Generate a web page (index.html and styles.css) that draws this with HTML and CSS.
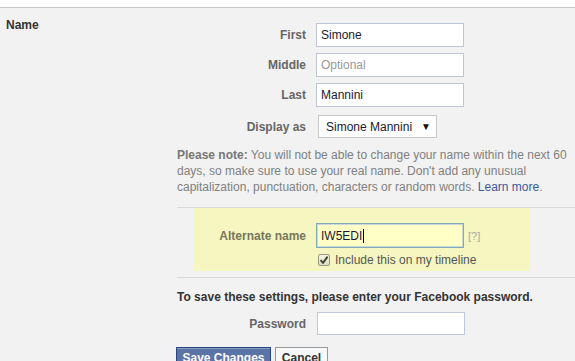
FILE: index.html
```html
<!DOCTYPE html>
<html>
<head>
<meta charset="utf-8">
<link rel="stylesheet" href="styles.css">
</head>
<body>
<div class="topbar"></div>
<div class="section">
  <div class="section-title">Name</div>
  <div class="section-body">
    <div class="rows">
      <div class="row">
        <label class="lbl">First</label>
        <input class="txt" type="text" value="Simone">
      </div>
      <div class="row">
        <label class="lbl">Middle</label>
        <input class="txt" type="text" placeholder="Optional">
      </div>
      <div class="row">
        <label class="lbl">Last</label>
        <input class="txt" type="text" value="Mannini">
      </div>
      <div class="row row-select">
        <label class="lbl">Display as</label>
        <div class="select"><span>Simone Mannini</span><span class="arrow">▼</span></div>
      </div>
    </div>
    <p class="note"><b>Please note:</b> You will not be able to change your name within the next 60 days, so make sure to use your real name. Don't add any unusual capitalization, punctuation, characters or random words. <a href="#">Learn more</a>.</p>
    <div class="sep"></div>
    <div class="alt-box">
      <div class="alt-row">
        <label class="lbl alt-lbl">Alternate name</label>
        <div class="txt alt-input"><span>IW5EDI</span><span class="caret"></span></div>
        <span class="help">[?]</span>
      </div>
      <div class="check-row">
        <span class="checkbox"><svg width="10" height="10" viewBox="0 0 10 10"><path d="M1.5 5.2 L4 7.8 L8.6 1.6" fill="none" stroke="#3d3d2a" stroke-width="1.8"/></svg></span>
        <span class="check-text">Include this on my timeline</span>
      </div>
    </div>
    <div class="sep sep2"></div>
    <div class="save-note">To save these settings, please enter your Facebook password.</div>
    <div class="row pw-row">
      <label class="lbl">Password</label>
      <input class="txt" type="password">
    </div>
    <div class="buttons">
      <button class="btn btn-primary">Save Changes</button>
      <button class="btn btn-cancel">Cancel</button>
    </div>
  </div>
</div>
</body>
</html>
```
FILE: styles.css
```css
html, body {
  margin: 0;
  padding: 0;
  height: 361px;
  overflow: hidden;
}
body {
  background: #f2f2f2;
  font-family: "Liberation Sans", Arial, sans-serif;
  font-size: 12px;
  color: #333;
}
.topbar {
  height: 7px;
  background: #fff;
  border-bottom: 1px solid #c6c6c6;
}
.section {
  display: grid;
  grid-template-columns: 171px 1fr;
  padding-left: 6px;
}
.section-title {
  padding-top: 10px;
  font-weight: bold;
  line-height: 14px;
  color: #333;
}
.section-body {
  padding-top: 15px;
}
.rows {
  display: flex;
  flex-direction: column;
  gap: 6px;
}
.row {
  display: grid;
  grid-template-columns: 129px 148px auto;
  column-gap: 10px;
  align-items: center;
}
.row-select {
  margin-top: 2px;
}
.lbl {
  text-align: right;
  font-weight: bold;
  color: #666;
  line-height: 14px;
}
.txt {
  box-sizing: border-box;
  width: 148px;
  height: 24px;
  margin: 0;
  border: 1px solid #bdc7d8;
  background: #fff;
  padding: 0 4px;
  font-family: "Liberation Sans", Arial, sans-serif;
  font-size: 12px;
  color: #1a1a2e;
  outline: none;
}
.txt::placeholder {
  color: #999;
}
.select {
  box-sizing: border-box;
  width: 119px;
  height: 23px;
  margin-left: 2px;
  border: 1px solid #c8c8c8;
  background: #fff;
  display: flex;
  align-items: center;
  justify-content: space-between;
  padding: 0 5px 0 7px;
  color: #1a1a2e;
}
.arrow {
  font-size: 10px;
  color: #111;
}
.note {
  margin: 9px 0 0 0;
  width: 398px;
  line-height: 16px;
  color: #808080;
}
.note b {
  color: #777;
}
.note a {
  color: #3b5998;
  text-decoration: none;
}
.sep {
  margin-top: 12px;
  border-top: 1px solid #d9d9d9;
}
.alt-box {
  margin-left: 16px;
  width: 337px;
  background: #f6f6c0;
  padding: 15px 0 3px 0;
}
.alt-row {
  display: grid;
  grid-template-columns: 113px 148px auto;
  column-gap: 10px;
  align-items: center;
}
.alt-lbl {
  color: #75765a;
}
.alt-input {
  height: 25px;
  background: #ffffc6;
  border: 1px solid #82a9b6;
  box-shadow: inset 0 0 0 1px #c9dade;
  display: flex;
  align-items: center;
  color: #1a1a2e;
}
.caret {
  display: inline-block;
  width: 1px;
  height: 14px;
  background: #000;
  margin-left: 1px;
}
.help {
  margin-left: -6px;
  font-size: 11px;
  color: #aaa;
}
.check-row {
  margin-top: 4px;
  margin-left: 124px;
  height: 16px;
  display: flex;
  align-items: center;
  gap: 5px;
}
.checkbox {
  box-sizing: border-box;
  width: 12px;
  height: 12px;
  margin-left: 1px;
  border: 1px solid #9a9a80;
  border-radius: 2px;
  background: linear-gradient(#f4f4e4, #dcdccb);
  display: flex;
  align-items: center;
  justify-content: center;
}
.check-text {
  color: #555;
}
.sep2 {
  margin-top: 6px;
}
.save-note {
  margin-top: 12px;
  line-height: 14px;
  font-weight: bold;
  color: #333;
}
.pw-row {
  margin-top: 8px;
}
.pw-row .txt {
  height: 23px;
  margin-left: 1px;
}
.buttons {
  margin-top: 12px;
  display: flex;
  gap: 4px;
  margin-left: -1px;
}
.btn {
  height: 22px;
  padding: 0 5px;
  font-family: "Liberation Sans", Arial, sans-serif;
  font-size: 12px;
  font-weight: bold;
  line-height: 20px;
}
.btn-primary {
  width: 95px;
  background: #5b74a8;
  border: 1px solid #29447e;
  color: #fff;
  box-shadow: inset 0 1px 0 #8a9cc2;
}
.btn-cancel {
  width: 53px;
  background: #f6f7f9;
  border: 1px solid #999;
  color: #333;
}
```
